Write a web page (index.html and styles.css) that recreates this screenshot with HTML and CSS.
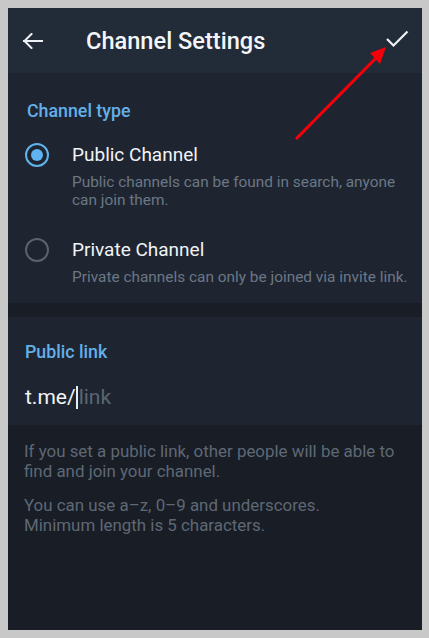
FILE: index.html
```html
<!DOCTYPE html>
<html lang="en">
  <head>
    <meta charset="UTF-8" />
    <meta name="viewport" content="width=device-width, initial-scale=1.0" />
    <title>Channel Settings</title>
    <link rel="stylesheet" href="styles.css">
  </head>
  <body>
    <div class="screen">
      <header class="topbar">
        <svg class="back" width="20" height="16" viewBox="0 0 20 16">
          <path d="M1 8H19M8.5 1L1.5 8L8.5 15" fill="none" stroke="#eef1f4" stroke-width="2" stroke-linecap="square" />
        </svg>
        <h1 class="title">Channel Settings</h1>
        <svg class="done" width="24" height="18" viewBox="0 0 24 18">
          <path d="M2 10L8.5 16.5L22.5 2.5" fill="none" stroke="#eef1f4" stroke-width="2.2" />
        </svg>
      </header>

      <section class="panel type-panel">
        <h2 class="label">Channel type</h2>

        <div class="option">
          <span class="radio checked"></span>
          <div class="option-text">
            <div class="option-title">Public Channel</div>
            <p class="option-desc">Public channels can be found in search, anyone can join them.</p>
          </div>
        </div>

        <div class="option">
          <span class="radio"></span>
          <div class="option-text">
            <div class="option-title">Private Channel</div>
            <p class="option-desc">Private channels can only be joined via invite link.</p>
          </div>
        </div>
      </section>

      <div class="divider"></div>

      <section class="panel link-panel">
        <h2 class="label">Public link</h2>
        <div class="link-input">t.me/<span class="caret"></span><span class="placeholder">link</span></div>
      </section>

      <div class="info">
        <p>If you set a public link, other people will be able to find and join your channel.</p>
        <p>You can use a–z, 0–9 and underscores.<br />Minimum length is 5 characters.</p>
      </div>

      <!-- red annotation arrow pointing at the check mark -->
      <svg class="pointer" width="414" height="622" viewBox="0 0 414 622">
        <line x1="289" y1="130" x2="368" y2="50" stroke="#f4000a" stroke-width="3.2" stroke-linecap="round" />
        <polygon points="378,39 362,45 372,56" fill="#f4000a" />
      </svg>
    </div>
  </body>
</html>
```

FILE: styles.css
```css
body {
  margin: 0;
  padding: 8px;
  background-color: #c8c8c8;
  font-family: Roboto, "Liberation Sans", sans-serif;
}

.screen {
  position: relative;
  width: 414px;
  height: 622px;
  background-color: #181d26;
  display: flex;
  flex-direction: column;
  overflow: hidden;
}

.topbar {
  height: 65px;
  flex-shrink: 0;
  background-color: #222b38;
  display: flex;
  align-items: center;
  padding: 0 13px 0 15px;
}

.back {
  display: block;
}

.title {
  margin: 0 0 0 43px;
  flex: 1;
  font-size: 23.6px;
  font-weight: 500;
  color: #f3f5f7;
}

.done {
  display: block;
  margin-top: -6px;
}

.panel {
  background-color: #1e2531;
}

.label {
  margin: 0;
  font-size: 17.8px;
  line-height: 20px;
  font-weight: 500;
  color: #63b0e8;
}

.type-panel {
  padding: 28px 10px 16.5px 19px;
}

.option {
  display: flex;
  align-items: flex-start;
  margin-top: 22px;
}

.option + .option {
  margin-top: 29px;
}

.radio {
  width: 24px;
  height: 24px;
  box-sizing: border-box;
  border: 2px solid #59626e;
  border-radius: 50%;
  flex-shrink: 0;
  margin: 0 23px 0 -2px;
  display: flex;
  align-items: center;
  justify-content: center;
}

.radio.checked {
  border: 2.6px solid #5fb3ee;
}

.radio.checked::after {
  content: "";
  width: 12px;
  height: 12px;
  border-radius: 50%;
  background-color: #5fb3ee;
}

.option-title {
  font-size: 19px;
  line-height: 24px;
  color: #f1f3f5;
}

.option-desc {
  margin: 7px 0 0;
  font-size: 15.4px;
  line-height: 17.5px;
  color: #6c7785;
}

.divider {
  height: 14px;
  flex-shrink: 0;
}

.link-panel {
  padding: 25px 17px 14px 17px;
}

.link-input {
  margin-top: 21px;
  font-size: 21px;
  line-height: 28px;
  color: #f1f3f5;
  display: flex;
  align-items: center;
}

.caret {
  width: 2px;
  height: 23px;
  background-color: #e4eef7;
  margin: 0 1px 0 0;
}

.placeholder {
  color: #5b6572;
}

.info {
  padding: 16px 14px 0 16px;
  font-size: 16.9px;
  line-height: 20px;
  color: #5f6875;
}

.info p {
  margin: 0 0 14px;
}

.pointer {
  position: absolute;
  left: 0;
  top: 0;
  pointer-events: none;
}
```
